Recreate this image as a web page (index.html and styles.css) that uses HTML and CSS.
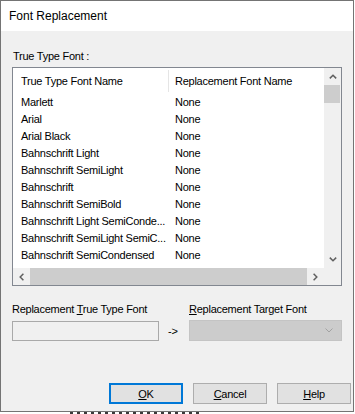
FILE: index.html
```html
<!DOCTYPE html>
<html lang="en">
<head>
    <meta charset="UTF-8">
    <title>Font Replacement</title>
    <link rel="stylesheet" href="styles.css">
</head>
<body>
    <div class="window">
        <div class="titlebar">Font Replacement</div>
        <div class="dialog">
            <div class="caption">True Type Font :</div>
            <div class="listbox">
                <div class="list">
                    <div class="list-head">
                        <span class="col name">True Type Font Name</span>
                        <span class="col">Replacement Font Name</span>
                    </div>
                    <div class="list-row"><span class="col name">Marlett</span><span class="col">None</span></div>
                    <div class="list-row"><span class="col name">Arial</span><span class="col">None</span></div>
                    <div class="list-row"><span class="col name">Arial Black</span><span class="col">None</span></div>
                    <div class="list-row"><span class="col name">Bahnschrift Light</span><span class="col">None</span></div>
                    <div class="list-row"><span class="col name">Bahnschrift SemiLight</span><span class="col">None</span></div>
                    <div class="list-row"><span class="col name">Bahnschrift</span><span class="col">None</span></div>
                    <div class="list-row"><span class="col name">Bahnschrift SemiBold</span><span class="col">None</span></div>
                    <div class="list-row"><span class="col name">Bahnschrift Light SemiConde...</span><span class="col">None</span></div>
                    <div class="list-row"><span class="col name">Bahnschrift SemiLight SemiC...</span><span class="col">None</span></div>
                    <div class="list-row"><span class="col name">Bahnschrift SemiCondensed</span><span class="col">None</span></div>
                </div>
                <div class="vscroll">
                    <div class="sb-btn">
                        <svg width="8" height="5" viewBox="0 0 8 5"><polyline points="0.8,4.4 4,1.2 7.2,4.4" /></svg>
                    </div>
                    <div class="sb-thumb"></div>
                    <div class="sb-space"></div>
                    <div class="sb-btn">
                        <svg width="8" height="5" viewBox="0 0 8 5"><polyline points="0.8,0.6 4,3.8 7.2,0.6" /></svg>
                    </div>
                </div>
                <div class="hscroll">
                    <div class="sb-btn">
                        <svg width="5" height="8" viewBox="0 0 5 8"><polyline points="4.4,0.8 1.2,4 4.4,7.2" /></svg>
                    </div>
                    <div class="sb-thumb"></div>
                    <div class="sb-btn">
                        <svg width="5" height="8" viewBox="0 0 5 8"><polyline points="0.6,0.8 3.8,4 0.6,7.2" /></svg>
                    </div>
                </div>
                <div class="sb-corner"></div>
            </div>

            <div class="replace">
                <label class="label">Replacement <u>T</u>rue Type Font</label>
                <span></span>
                <label class="label"><u>R</u>eplacement Target Font</label>
                <div class="textbox"></div>
                <div class="arrow">-&gt;</div>
                <div class="combo">
                    <svg width="8" height="5" viewBox="0 0 8 5"><polyline points="0.5,0.5 4,4 7.5,0.5" /></svg>
                </div>
            </div>

            <div class="buttons">
                <button class="button default"><u>O</u>K</button>
                <button class="button"><u>C</u>ancel</button>
                <button class="button"><u>H</u>elp</button>
            </div>
        </div>
    </div>
    <div class="behind"></div>
</body>
</html>
```

FILE: styles.css
```css
body {
    margin: 0;
    background: #ffffff;
    font-family: "Liberation Sans", Arial, sans-serif;
    font-size: 11px;
    color: #000000;
}
.window {
    width: 354px;
    height: 412px;
    box-sizing: border-box;
    border: 1px solid #747474;
    background: #f0f0f0;
}
.titlebar {
    height: 30px;
    box-sizing: border-box;
    padding: 8px 0 0 8px;
    background: #ffffff;
    font-size: 12px;
    line-height: 14px;
}
.dialog {
    padding: 19px 11px 0;
    letter-spacing: -0.25px;
}
.caption {
    line-height: 13px;
    margin: 0 0 4px 1px;
}

/* list view */
.listbox {
    height: 219px;
    box-sizing: border-box;
    border: 1px solid #828790;
    background: #ffffff;
    display: grid;
    grid-template-columns: 1fr 17px;
    grid-template-rows: 1fr 17px;
}
.list {
    overflow: hidden;
}
.list-head,
.list-row {
    display: grid;
    grid-template-columns: 156px 1fr;
    white-space: nowrap;
}
.list-head {
    height: 26px;
    line-height: 26px;
}
.list-head .name {
    background: linear-gradient(#e5e5e5, #e5e5e5) no-repeat right 0 top 2px / 1px 22px;
}
.list-row {
    height: 17px;
    line-height: 17px;
}
.col {
    padding-left: 6px;
    overflow: hidden;
}
.col.name {
    padding-left: 8px;
}

/* scroll bars */
.vscroll,
.hscroll {
    background: #f0f0f0;
    display: flex;
}
.vscroll {
    flex-direction: column;
}
.sb-btn {
    flex: 0 0 17px;
    display: flex;
    align-items: center;
    justify-content: center;
}
.sb-btn svg polyline {
    fill: none;
    stroke: #606060;
    stroke-width: 1.5;
}
.vscroll .sb-thumb {
    height: 18px;
    margin-right: 1px;
    background: #cdcdcd;
}
.sb-space {
    flex: 1;
}
.hscroll .sb-thumb {
    flex: 1;
    background: #cdcdcd;
}
.sb-corner {
    background: #f0f0f0;
}

/* replacement fields */
.replace {
    margin-top: 17px;
    display: grid;
    grid-template-columns: 147px 30px 153px;
    grid-template-rows: 13px 20px;
    row-gap: 5px;
}
.label {
    line-height: 13px;
    white-space: nowrap;
}
.textbox {
    border: 1px solid #a9a9a9;
    background: #f0f0f0;
}
.arrow {
    padding-left: 9px;
    line-height: 20px;
}
.combo {
    margin-top: -1px;
    border: 1px solid #c4c4c4;
    background: #cccccc;
    display: flex;
    align-items: center;
    justify-content: flex-end;
    padding-right: 8px;
}
.combo polyline {
    fill: none;
    stroke: #a2a2a2;
    stroke-width: 1;
}

/* dialog buttons */
.buttons {
    margin: 42px -9px 0 0;
    display: flex;
    justify-content: flex-end;
    gap: 10px;
}
.button {
    width: 74px;
    height: 21px;
    padding: 0;
    border: 1px solid #adadad;
    background: #e1e1e1;
    font-family: inherit;
    font-size: 11px;
    letter-spacing: -0.25px;
    color: #000000;
}
.button.default {
    border: 2px solid #0078d7;
}
.behind {
    width: 130px;
    height: 2px;
    margin-left: 70px;
    background: repeating-linear-gradient(90deg, #3a3a3a 0 3px, transparent 3px 7px);
}
```
